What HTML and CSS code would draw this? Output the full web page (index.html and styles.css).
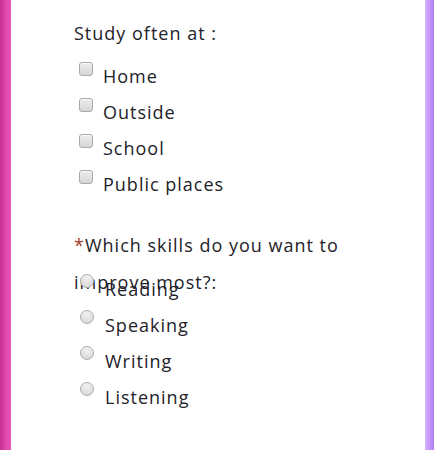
FILE: index.html
```html
<!DOCTYPE html>
<html>
<head>
<meta charset="utf-8">
<link rel="stylesheet" href="styles.css">
</head>
<body>
<div class="frame">
  <div class="edge edge-left"></div>
  <main class="card">
    <div class="group">
      <p class="label">Study often at :</p>
      <ul class="options">
        <li><input type="checkbox"><span>Home</span></li>
        <li><input type="checkbox"><span>Outside</span></li>
        <li><input type="checkbox"><span>School</span></li>
        <li><input type="checkbox"><span>Public places</span></li>
      </ul>
    </div>
    <div class="group group-radio">
      <p class="label label-fixed"><span class="req">*</span>Which skills do you want to improve most?:</p>
      <ul class="options radios">
        <li><input type="radio" name="skill"><span>Reading</span></li>
        <li><input type="radio" name="skill"><span>Speaking</span></li>
        <li><input type="radio" name="skill"><span>Writing</span></li>
        <li><input type="radio" name="skill"><span>Listening</span></li>
      </ul>
    </div>
  </main>
  <div class="edge edge-right"></div>
</div>
</body>
</html>
```
FILE: styles.css
```css
html, body {
  margin: 0;
  padding: 0;
  height: 100%;
}
body {
  font-family: "Open Sans", sans-serif;
  color: #222228;
  background: #fff;
  overflow: hidden;
}
.frame {
  display: flex;
  height: 450px;
}
.edge {
  flex: 0 0 auto;
}
.edge-left {
  width: 11px;
  background: linear-gradient(to right, #c8308f, #e24aae 60%, #e855b8);
}
.edge-right {
  width: 9px;
  background: linear-gradient(to right, #d6b4ff, #b27cf4);
}
.card {
  flex: 1;
  background: #fff;
  padding: 19px 0 0 63px;
}
.label {
  margin: 0;
  font-size: 18px;
  letter-spacing: 1px;
  line-height: 28px;
  width: 275px;
}
.label-fixed {
  height: 28px;
  line-height: 37px;
}
.req {
  color: #a3402a;
}
.options {
  list-style: none;
  margin: 0;
  padding: 15px 0 0 5px;
}
.options li {
  display: flex;
  align-items: flex-start;
  height: 36px;
  font-size: 18px;
  letter-spacing: 1px;
}
.options input {
  appearance: none;
  -webkit-appearance: none;
  margin: 0 10px 0 0;
  width: 14px;
  height: 14px;
  flex: 0 0 14px;
  border: 1px solid #a9a9a9;
  border-radius: 3px;
  background: linear-gradient(#ededed, #d6d6d6);
  box-shadow: inset 0 1px 1px rgba(255,255,255,0.8);
  box-sizing: border-box;
}
.options span {
  padding-top: 2px;
  line-height: 24px;
}
.group-radio {
  margin-top: 21px;
}
.radios {
  padding-top: 19px;
  padding-left: 6px;
}
.radios input {
  margin-right: 11px;
}
.radios span {
  padding-top: 3px;
}
.radios input {
  border-radius: 50%;
  background: radial-gradient(circle at 50% 35%, #f0f0f0, #d2d2d2);
}
```
